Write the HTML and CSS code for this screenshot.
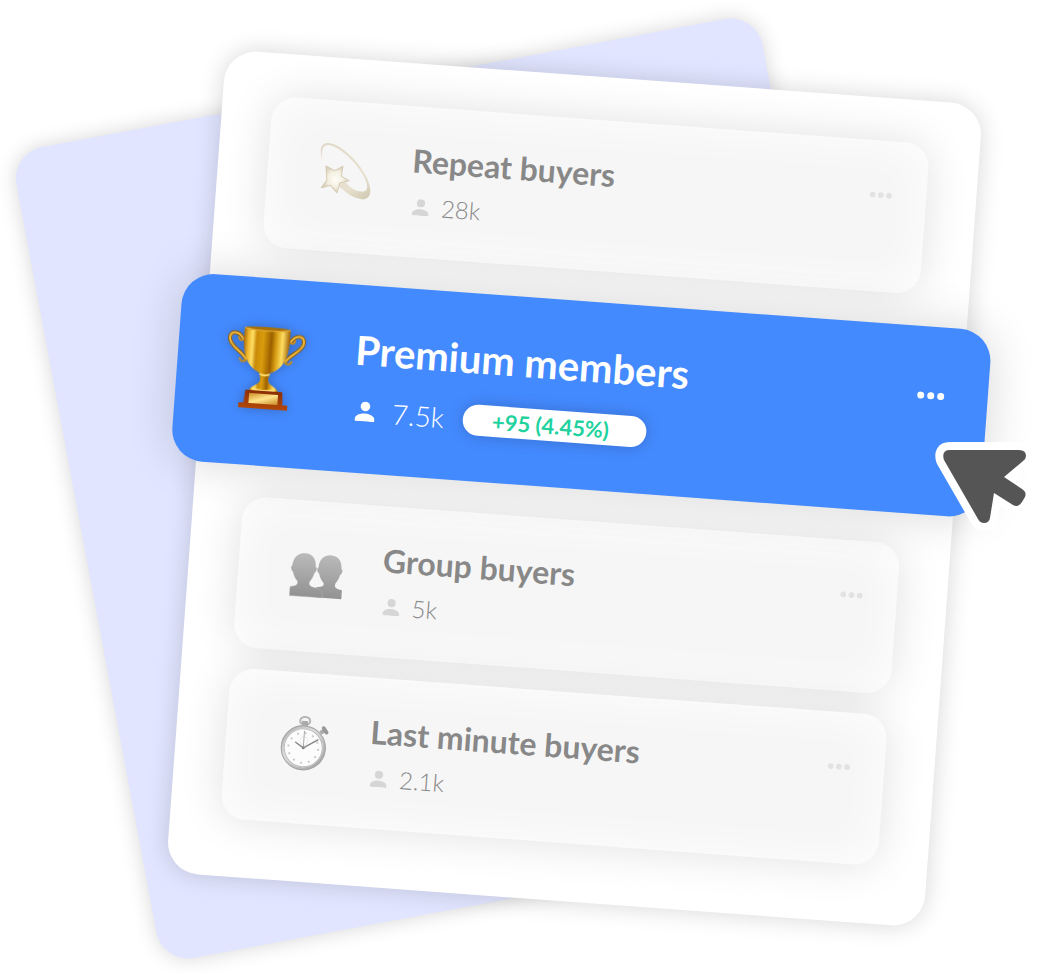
FILE: index.html
```
<!DOCTYPE html>
<html lang="en">
<head>
    <meta charset="UTF-8">
    <meta name="viewport" content="width=device-width, initial-scale=1.0">
    <title>Customer segments</title>
    <link rel="stylesheet" href="styles.css">
</head>
<body>
    <svg class="defs" aria-hidden="true">
        <symbol id="user" viewBox="0 0 20 20">
            <circle cx="10" cy="5" r="4.8"/>
            <path d="M0 20v-2c0-3.400 4.500-6 10-6s10 2.600 10 6v2z"/>
        </symbol>
        <symbol id="dots" viewBox="0 0 28 8">
            <circle cx="4" cy="4" r="3.500"/>
            <circle cx="14" cy="4" r="3.500"/>
            <circle cx="24" cy="4" r="3.500"/>
        </symbol>
    </svg>

    <main class="scene">
        <div class="backdrop"></div>

        <ul class="panel">
            <li class="card">
                <svg class="icon" viewBox="0 0 56 56" aria-hidden="true">
                    <defs>
                        <linearGradient id="trail" x1="0" y1="0" x2="1" y2="1">
                            <stop offset="0" stop-color="#e0d8c6"/>
                            <stop offset=".7" stop-color="#e8e1cf"/>
                            <stop offset="1" stop-color="#cfc7b0"/>
                        </linearGradient>
                        <radialGradient id="star">
                            <stop offset="0" stop-color="#fffef8"/>
                            <stop offset=".6" stop-color="#f3efe0"/>
                            <stop offset="1" stop-color="#d6cdb6"/>
                        </radialGradient>
                    </defs>
                    <path fill="url(#trail)" d="M3 18C-1 7 0 0 8 0c15 0 43 26 45 44 1 8-5 11-12 9-7-1-14-6-21-12l6-5c6 7 12 10 18 10 6 0 7-4 4-11C42 22 20 2 8 2 2 2 1 8 3 18z"/>
                    <path fill="url(#star)" stroke="#d5ccb6" stroke-linejoin="round" d="M7 23l9 4 8-5-1 10 8 4-9 3-2 10-7-7-9 3 5-8z"/>
                </svg>
                <div class="info">
                    <h2 class="title">Repeat buyers</h2>
                    <div class="stats">
                        <svg class="user" aria-hidden="true"><use href="#user"/></svg>
                        <span>28k</span>
                    </div>
                </div>
                <button class="menu" aria-label="More options"><svg><use href="#dots"/></svg></button>
            </li>

            <li class="card featured">
                <svg class="icon trophy" viewBox="2 0 84 84" aria-hidden="true">
                    <defs>
                        <linearGradient id="cup">
                            <stop offset="0" stop-color="#a86808"/>
                            <stop offset=".1" stop-color="#efb62b"/>
                            <stop offset=".19" stop-color="#ffdf68"/>
                            <stop offset=".28" stop-color="#c98b08"/>
                            <stop offset=".42" stop-color="#d99c0c"/>
                            <stop offset=".6" stop-color="#9b5f00"/>
                            <stop offset=".7" stop-color="#d49a10"/>
                            <stop offset=".84" stop-color="#ffdd62"/>
                            <stop offset="1" stop-color="#9c6004"/>
                        </linearGradient>
                        <linearGradient id="plate" x1="0" y1="0" x2="1" y2="1">
                            <stop offset="0" stop-color="#d08e28"/>
                            <stop offset=".5" stop-color="#ffe68c"/>
                            <stop offset="1" stop-color="#c98a25"/>
                        </linearGradient>
                        <linearGradient id="wood" x2="0" y2="1">
                            <stop offset="0" stop-color="#8c2f05"/>
                            <stop offset="1" stop-color="#b34808"/>
                        </linearGradient>
                    </defs>
                    <g fill="none" stroke-linecap="round">
                        <g stroke="#8d5a0c" stroke-width="4">
                            <path d="M18 14C13 6 4 7 5 15c1 8 13 12 17 19"/>
                            <path d="M66 14C71 6 80 7 79 15c-1 8-13 12-17 19"/>
                        </g>
                        <g stroke="#f0bb3c" stroke-width="2">
                            <path d="M18 14C13 6 4 7 5 15c1 8 13 12 17 19"/>
                            <path d="M66 14C71 6 80 7 79 15c-1 8-13 12-17 19"/>
                        </g>
                        <path stroke="#c58b1b" stroke-width="2" d="M19 15q-5 2-5-2M65 15q5 2 5-2M22 36q-5 2-6-2M62 36q5 2 6-2"/>
                    </g>
                    <path fill="url(#cup)" d="M36 44h12l-2 9c0 4 2 5 7 8 3 2 4 4 3 6H28c-1-2 0-4 3-6 5-3 7-4 7-8z"/>
                    <path fill="url(#cup)" d="M19 3h46c0 9 1 19-3 29-3 8-9 13-15 15H37c-6-2-12-7-15-15-4-10-3-20-3-29z"/>
                    <ellipse cx="42" cy="3" rx="23" ry="2" fill="#a96f08"/>
                    <path fill="none" stroke="#e9b43c" d="M19 3q23 4 46 0"/>
                    <path fill="none" stroke="#ffdc72" stroke-width="2" d="M37 48q5 3 10 0M30 63q12 4 24 0"/>
                    <path fill="url(#wood)" d="M24 65h37l1 13h5v5H18v-5h5z"/>
                    <path fill="url(#plate)" d="M28 68h29v10H28z"/>
                </svg>
                <div class="info">
                    <h2 class="title">Premium members</h2>
                    <div class="stats">
                        <svg class="user" aria-hidden="true"><use href="#user"/></svg>
                        <span>7.5k</span>
                        <span class="growth">+95 (4.45%)</span>
                    </div>
                </div>
                <button class="menu" aria-label="More options"><svg><use href="#dots"/></svg></button>
            </li>

            <li class="card">
                <svg class="icon" viewBox="0 0 56 56" aria-hidden="true">
                    <defs>
                        <linearGradient id="people" x2="0" y2="1">
                            <stop offset="0" stop-color="#bababa"/>
                            <stop offset="1" stop-color="#929292"/>
                        </linearGradient>
                    </defs>
                    <path fill="url(#people)" d="M41 10c8 0 11 6 11 13 2 0 1 5-1 6-1 5-3 7-4 9-1 4 1 5 7 6v9H28V43c7-1 8-2 7-5-2-2-4-5-5-9-2-1-3-6-1-6 0-7 4-13 12-13z"/>
                    <path fill="url(#people)" stroke="#b5b5b5" stroke-width=".5" d="M15 10c8 0 11 6 11 13 2 0 1 5-1 6-1 5-3 7-4 9-1 4 2 5 8 6 4 1 6 4 6 9H2v-9c6-1 8-2 7-6-2-2-4-5-5-9-2-1-3-6-1-6 0-7 4-13 12-13z"/>
                </svg>
                <div class="info">
                    <h2 class="title">Group buyers</h2>
                    <div class="stats">
                        <svg class="user" aria-hidden="true"><use href="#user"/></svg>
                        <span>5k</span>
                    </div>
                </div>
                <button class="menu" aria-label="More options"><svg><use href="#dots"/></svg></button>
            </li>

            <li class="card">
                <svg class="icon" viewBox="0 0 56 56" aria-hidden="true">
                    <defs>
                        <linearGradient id="steel" x2="1" y2="1">
                            <stop offset="0" stop-color="#aaa"/>
                            <stop offset=".4" stop-color="#dedede"/>
                            <stop offset="1" stop-color="#999"/>
                        </linearGradient>
                    </defs>
                    <ellipse cx="27" cy="5" rx="5" ry="4" fill="none" stroke="#b5b5b5" stroke-width="2"/>
                    <path fill="#aaa" d="M24 5h6v6h-6z"/>
                    <path stroke="#aaa" stroke-width="4" d="M43 16l4-3"/>
                    <path stroke="#999" stroke-width="4" stroke-linecap="round" d="M46 11l3 4"/>
                    <circle cx="27" cy="32" r="21" fill="#fcfcfc" stroke="url(#steel)" stroke-width="3"/>
                    <circle cx="27" cy="32" r="22" fill="none" stroke="#a5a5a5"/>
                    <circle cx="27" cy="32" r="19" fill="none" stroke="#b9b9b9"/>
                    <circle cx="27" cy="32" r="15" fill="none" stroke="#ccc" stroke-width="2" stroke-dasharray="2 5.850"/>
                    <circle cx="27" cy="25" r="4" fill="none" stroke="#ddd" stroke-dasharray="1 1"/>
                    <path fill="none" stroke="#888" stroke-width="1.500" stroke-linecap="round" d="M19 27l8 5 14-9"/>
                    <path stroke="#aaa" d="M27 15v18"/>
                    <circle cx="27" cy="32" r="1.500" fill="#888"/>
                </svg>
                <div class="info">
                    <h2 class="title">Last minute buyers</h2>
                    <div class="stats">
                        <svg class="user" aria-hidden="true"><use href="#user"/></svg>
                        <span>2.1k</span>
                    </div>
                </div>
                <button class="menu" aria-label="More options"><svg><use href="#dots"/></svg></button>
            </li>
        </ul>

        <svg class="cursor" viewBox="0 0 100 90" aria-hidden="true">
            <path d="M15 9H84Q91 9 91 15Q91 18 88 20L69 36L87 48Q92 51 90 56L87 61Q83 67 78 64L59 52L55 77Q54 82 49 82Q45 82 43 78L9 19Q6 9 15 9Z"/>
        </svg>
    </main>
</body>
</html>
```
FILE: styles.css
```
* {
    box-sizing: border-box;
}
body {
    display: grid;
    align-items: center;
    min-height: 100vh;
    margin: 0;
    padding-top: 3px;
    overflow: hidden;
    background: #fff;
    font-family: Lato, "Open Sans", sans-serif;
}
.defs {
    position: absolute;
    width: 0;
    height: 0;
}
.scene {
    position: relative;
    display: grid;
    width: 72.2%;
    margin: 0 auto;
    left: 49px;
}
/* both sheets share one grid cell, so they are always the same size */
.backdrop,
.panel {
    grid-area: 1 / 1;
    border-radius: 32px;
}
.backdrop {
    background: #e1e5ff;
    box-shadow: 0 0 20px rgba(0, 0, 0, 0.16);
    transform: translateX(-115px) rotate(-10.6deg);
}
.panel {
    display: flex;
    flex-direction: column;
    gap: 21px;
    margin: 0;
    padding: 43px 50px 58px;
    list-style: none;
    background: #fff;
    box-shadow: 0 0 24px rgba(0, 0, 0, 0.16);
    transform: rotate(4.2deg);
}
.card {
    display: flex;
    align-items: flex-start;
    padding: 34px 34px 36px 51px;
    border-radius: 24px;
    background: #f6f6f6;
    box-shadow: 0 0 44px rgba(0, 0, 0, 0.12), inset 0 0 48px rgba(255, 255, 255, 0.9);
    color: #888;
}
.icon {
    flex: none;
    width: 56px;
    height: 56px;
    margin: 9px 37px 0 0;
}
.info {
    flex: 1;
}
.title {
    margin: 0 0 11px;
    font-size: 32px;
    font-weight: 700;
    line-height: 40px;
}
.stats {
    display: flex;
    align-items: center;
    gap: 12px;
    padding-left: 3px;
    font-size: 24px;
    font-weight: 300;
    line-height: 30px;
}
.user {
    width: 17px;
    height: 17px;
    fill: #d6d6d6;
}
.menu {
    margin: 17px 0 0;
    padding: 0;
    border: none;
    background: none;
    line-height: 0;
    cursor: pointer;
}
.menu svg {
    width: 23px;
    height: 7px;
    fill: #e2e2e2;
}

.featured {
    position: relative;
    margin: 10px -76px;
    padding: 41px 43px 44px 48px;
    border-radius: 32px;
    background: #448aff;
    box-shadow: 0 0 48px rgba(0, 0, 0, 0.16);
    color: #fff;
}
.featured .icon {
    width: 84px;
    height: 84px;
    margin: 7px 45px 0 0;
}
.trophy {
    filter: drop-shadow(0 0 6px rgba(0, 0, 0, 0.25));
}
.featured .title {
    margin-bottom: 19px;
    font-size: 40px;
    line-height: 48px;
}
.featured .stats {
    gap: 17px;
    padding-left: 4px;
    font-size: 28px;
    line-height: 36px;
}
.featured .user {
    width: 20px;
    height: 20px;
    fill: #fff;
}
.featured .menu {
    margin-top: 24px;
}
.featured .menu svg {
    width: 28px;
    height: 8px;
    fill: #fff;
}
.growth {
    margin-left: 2px;
    padding: 0 37px 0 29px;
    border-radius: 16px;
    background: #fff;
    box-shadow: 0 0 16px rgba(0, 0, 0, 0.2);
    color: #1fd29e;
    font-size: 22px;
    font-weight: 700;
    line-height: 31px;
}

.cursor {
    position: absolute;
    top: 365px;
    right: -81px;
    width: 100px;
    height: 90px;
    overflow: visible;
    fill: #555;
    stroke: #fff;
    stroke-width: 16px;
    stroke-linejoin: round;
    paint-order: stroke;
}
```
